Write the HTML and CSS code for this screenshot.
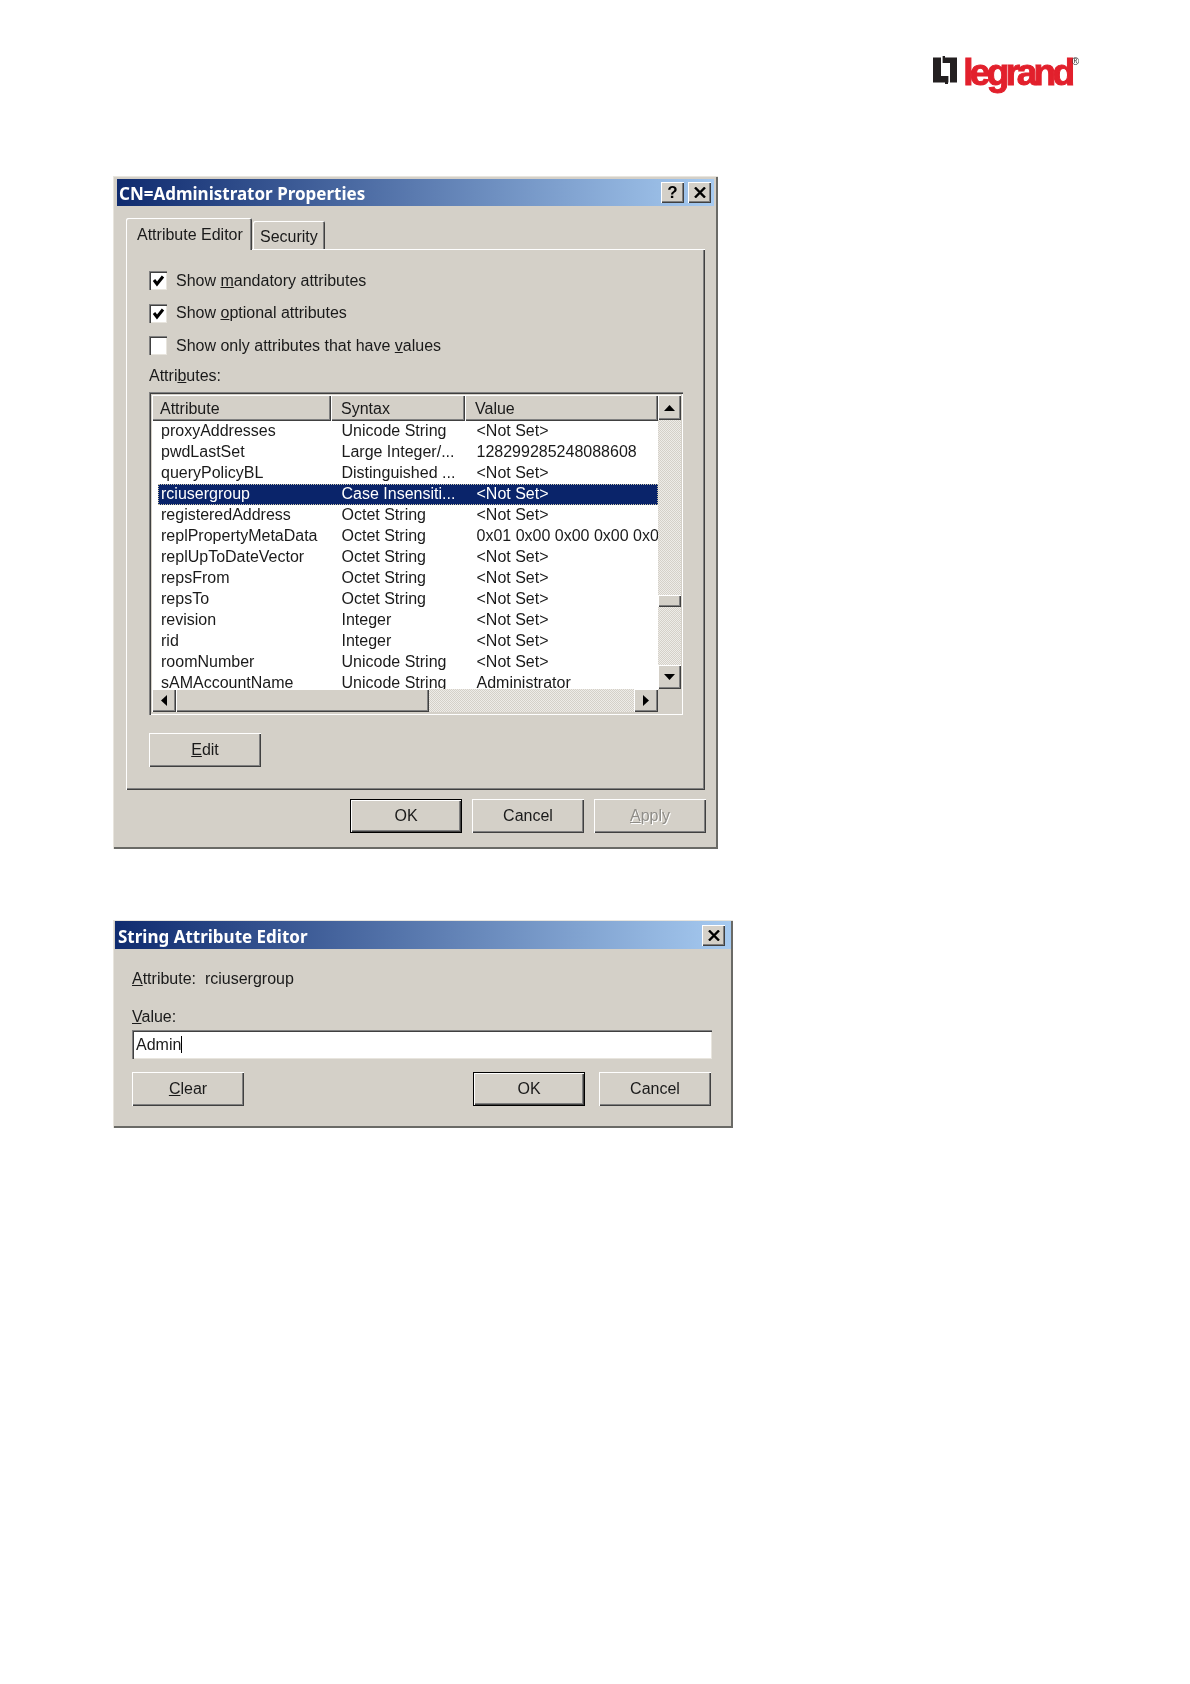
FILE: index.html
```html
<!DOCTYPE html>
<html lang="en">
<head>
<meta charset="utf-8">
<title>Attribute Editor</title>
<link rel="stylesheet" href="styles.css">
</head>
<body>
<header class="page-head">
  <div class="logo">
    <svg class="logo-mark" viewBox="0 0 24 28" width="24" height="28" aria-hidden="true">
      <rect x="0" y="1.5" width="24" height="25" fill="#231f20"/>
      <rect x="9" y="0" width="3" height="2" fill="#231f20"/>
      <rect x="12" y="26" width="3" height="2" fill="#231f20"/>
      <rect x="8" y="0" width="1.6" height="8" fill="#fff"/>
      <rect x="8" y="7" width="9" height="13" fill="#fff"/>
      <rect x="15.4" y="19" width="1.6" height="9" fill="#fff"/>
    </svg>
    <span class="logo-word">legrand</span><span class="logo-reg">®</span>
  </div>
</header>

<main class="page">
  <section class="dialog props">
    <div class="titlebar">
      <span class="title-text">CN=Administrator Properties</span>
      <div class="title-btns">
        <span class="cap-btn">?</span>
        <span class="cap-btn">
          <svg viewBox="0 0 12 11" width="12" height="11"><path d="M1 0.5 L11 10.5 M11 0.5 L1 10.5" stroke="#000" stroke-width="2.4" fill="none"/></svg>
        </span>
      </div>
    </div>

    <div class="tabs">
      <div class="tab tab-on">Attribute Editor</div>
      <div class="tab">Security</div>
    </div>

    <div class="panel">
      <div class="checks">
        <label class="check"><span class="box"><svg viewBox="0 0 13 13" width="13" height="13"><path d="M2 6 L5 10 L11 2.5" stroke="#000" stroke-width="3" fill="none"/></svg></span>Show <u>m</u>andatory attributes</label>
        <label class="check"><span class="box"><svg viewBox="0 0 13 13" width="13" height="13"><path d="M2 6 L5 10 L11 2.5" stroke="#000" stroke-width="3" fill="none"/></svg></span>Show <u>o</u>ptional attributes</label>
        <label class="check"><span class="box"></span>Show only attributes that have <u>v</u>alues</label>
      </div>
      <div class="list-label">Attri<u>b</u>utes:</div>

      <div class="list">
        <div class="list-main">
          <div class="list-head">
            <span class="col-head">Attribute</span>
            <span class="col-head">Syntax</span>
            <span class="col-head">Value</span>
          </div>
          <div class="row"><span>proxyAddresses</span><span>Unicode String</span><span>&lt;Not Set&gt;</span></div>
          <div class="row"><span>pwdLastSet</span><span>Large Integer/...</span><span>128299285248088608</span></div>
          <div class="row"><span>queryPolicyBL</span><span>Distinguished ...</span><span>&lt;Not Set&gt;</span></div>
          <div class="row row-on"><span>rciusergroup</span><span>Case Insensiti...</span><span>&lt;Not Set&gt;</span></div>
          <div class="row"><span>registeredAddress</span><span>Octet String</span><span>&lt;Not Set&gt;</span></div>
          <div class="row"><span>replPropertyMetaData</span><span>Octet String</span><span>0x01 0x00 0x00 0x00 0x00</span></div>
          <div class="row"><span>replUpToDateVector</span><span>Octet String</span><span>&lt;Not Set&gt;</span></div>
          <div class="row"><span>repsFrom</span><span>Octet String</span><span>&lt;Not Set&gt;</span></div>
          <div class="row"><span>repsTo</span><span>Octet String</span><span>&lt;Not Set&gt;</span></div>
          <div class="row"><span>revision</span><span>Integer</span><span>&lt;Not Set&gt;</span></div>
          <div class="row"><span>rid</span><span>Integer</span><span>&lt;Not Set&gt;</span></div>
          <div class="row"><span>roomNumber</span><span>Unicode String</span><span>&lt;Not Set&gt;</span></div>
          <div class="row"><span>sAMAccountName</span><span>Unicode String</span><span>Administrator</span></div>
        </div>
        <div class="vbar">
          <span class="sb-btn sb-up"><svg viewBox="0 0 11 6" width="11" height="6"><path d="M5.5 0 L11 6 L0 6 Z"/></svg></span>
          <span class="track vtrack-a"></span>
          <span class="vthumb"></span>
          <span class="track vtrack-b"></span>
          <span class="sb-btn sb-tall"><svg viewBox="0 0 11 6" width="11" height="6"><path d="M0 0 L11 0 L5.5 6 Z"/></svg></span>
        </div>
        <div class="hbar">
          <span class="sb-btn sb-wide"><svg viewBox="0 0 6 11" width="6" height="11"><path d="M6 0 L6 11 L0 5.5 Z"/></svg></span>
          <span class="hthumb"></span>
          <span class="track htrack"></span>
          <span class="sb-btn sb-wide"><svg viewBox="0 0 6 11" width="6" height="11"><path d="M0 0 L6 5.5 L0 11 Z"/></svg></span>
        </div>
        <div class="corner"></div>
      </div>

      <button class="btn btn-edit" type="button"><u>E</u>dit</button>
    </div>

    <div class="actions">
      <button class="btn btn-default" type="button">OK</button>
      <button class="btn" type="button">Cancel</button>
      <button class="btn btn-off" type="button"><u>A</u>pply</button>
    </div>
  </section>

  <section class="dialog editor">
    <div class="titlebar">
      <span class="title-text">String Attribute Editor</span>
      <div class="title-btns">
        <span class="cap-btn">
          <svg viewBox="0 0 12 11" width="12" height="11"><path d="M1 0.5 L11 10.5 M11 0.5 L1 10.5" stroke="#000" stroke-width="2.4" fill="none"/></svg>
        </span>
      </div>
    </div>
    <div class="editor-body">
      <div class="field-line"><u>A</u>ttribute:&nbsp; rciusergroup</div>
      <div class="field-line value-label"><u>V</u>alue:</div>
      <div class="input">Admin<span class="caret"></span></div>
      <div class="editor-actions">
        <button class="btn" type="button"><u>C</u>lear</button>
        <span class="spacer"></span>
        <button class="btn btn-default" type="button">OK</button>
        <button class="btn" type="button">Cancel</button>
      </div>
    </div>
  </section>
</main>
</body>
</html>
```

FILE: styles.css
```css
* { box-sizing: border-box; }

html, body { margin: 0; background: #fff; }

body {
  width: 1190px;
  height: 1684px;
  overflow: hidden;
  font-family: "Liberation Sans", Arial, sans-serif;
  font-size: 16px;
  color: #1a1a1a;
}

.page-head {
  height: 176px;
  display: flex;
  justify-content: flex-end;
  align-items: flex-start;
  padding: 56px 111px 0 0;
}

.logo { display: flex; align-items: flex-start; height: 40px; filter: blur(0.4px); }
.logo-mark { display: block; margin-right: 6px; }
.logo-word {
  font-family: "Liberation Sans", Arial, sans-serif;
  font-weight: 700;
  font-size: 37px;
  line-height: 34px;
  letter-spacing: -3.6px;
  color: #e2202c;
  -webkit-text-stroke: 1px #e2202c;
}
.logo-reg { font-size: 10px; line-height: 10px; color: #333; margin: 1px 0 0 0; }

.page { padding-left: 113px; }

.dialog {
  background: #d4d0c8;
  box-shadow: inset 1px 1px 0 #e8e5de, inset -2px -2px 0 #6a6a66;
  filter: blur(0.35px);
}

.props { width: 605px; height: 673px; padding: 3px 4px 0; }
.editor { width: 620px; height: 208px; margin-top: 71px; padding: 1px 2px 0; }

.titlebar {
  height: 27px;
  display: flex;
  align-items: center;
  justify-content: space-between;
  padding: 0 3px 0 2px;
  background: linear-gradient(90deg, #0f2b6f 0%, #a6caf0 100%);
}

.editor .titlebar { height: 28px; padding: 0 6px 0 3px; }

.title-text {
  font-family: "Noto Sans", sans-serif;
  font-weight: 700;
  font-size: 17px;
  padding-top: 2px;
  color: #fff;
}

.title-btns { display: flex; gap: 4px; }

.cap-btn {
  width: 23px;
  height: 21px;
  display: flex;
  align-items: center;
  justify-content: center;
  background: #d4d0c8;
  font-weight: 700;
  font-size: 17px;
  color: #000;
  box-shadow: inset 1px 1px 0 #fff, inset -1px -1px 0 #404040, inset -2px -2px 0 #808080;
}

.tabs {
  display: flex;
  align-items: flex-end;
  height: 43px;
  padding: 13px 0 0 9px;
}

.tab {
  height: 28px;
  padding: 4px 7px 0;
  display: flex;
  align-items: center;
  background: #d4d0c8;
  border-radius: 2px 2px 0 0;
  margin-left: 1px;
  box-shadow: inset 1px 1px 0 #fff, inset -1px 0 0 #404040, inset -2px 0 0 #808080;
}

.tab-on {
  position: relative;
  z-index: 1;
  height: 32px;
  margin: 0 0 -1px;
  width: 126px;
  padding: 1px 0 0 11px;
}

.panel {
  margin-left: 9px;
  width: 579px;
  height: 541px;
  padding: 22px 23px 0;
  box-shadow: inset 1px 1px 0 #fff, inset -1px -1px 0 #404040, inset -2px -2px 0 #808080;
}

.checks { display: flex; flex-direction: column; gap: 13.5px; }

.check { display: flex; align-items: center; height: 19px; white-space: pre; }

.box {
  width: 18px;
  height: 19px;
  margin-right: 9px;
  display: flex;
  align-items: center;
  justify-content: center;
  background: #fff;
  box-shadow: inset 1px 1px 0 #808080, inset 2px 2px 0 #404040, inset -1px -1px 0 #e8e5de;
}

.list-label { height: 20px; line-height: 20px; margin-top: 11px; }

.list {
  width: 534px;
  height: 323px;
  margin-top: 6px;
  padding: 3px 2px 3px 3px;
  display: grid;
  grid-template-columns: 506px 23px;
  grid-template-rows: 294px 23px;
  box-shadow: inset 1px 1px 0 #808080, inset 2px 2px 0 #404040, inset -1px -1px 0 #fff;
}

.list-main { background: #fff; overflow: hidden; }

.list-head {
  display: grid;
  grid-template-columns: 179px 134px 193px;
  height: 26px;
}

.col-head {
  display: flex;
  align-items: center;
  padding: 1px 0 0 8px;
  background: #d4d0c8;
  box-shadow: inset 1px 1px 0 #fff, inset -1px -1px 0 #404040, inset -2px -2px 0 #808080;
}

.col-head + .col-head { padding-left: 10px; }

.row {
  display: grid;
  grid-template-columns: 172px 135px 1fr;
  height: 21px;
  line-height: 20px;
  margin-left: 6px;
  padding-left: 3px;
  white-space: nowrap;
}

.row span { overflow: hidden; }
.row span + span { padding-left: 8.5px; }

.row-on {
  background: #0a246a;
  color: #fff;
  outline: 1px dotted #c9c4a8;
  outline-offset: -1px;
}

.vbar { display: flex; flex-direction: column; }
.hbar { display: flex; }
.corner { background: #d4d0c8; }

.track {
  background: repeating-conic-gradient(#eeece8 0 25%, #d4d0c8 0 50%) 0 0 / 2px 2px;
}

.vtrack-a { height: 175px; }
.vtrack-b { height: 58px; }
.htrack { flex: 1; }

.sb-btn {
  display: flex;
  align-items: center;
  justify-content: center;
  flex: none;
  background: #d4d0c8;
  box-shadow: inset 1px 1px 0 #fff, inset -1px -1px 0 #404040, inset -2px -2px 0 #808080;
}

.sb-up { width: 23px; height: 25px; }
.sb-tall { width: 23px; height: 24px; }
.sb-wide { width: 24px; height: 23px; }

.vthumb, .hthumb {
  flex: none;
  background: #d4d0c8;
  box-shadow: inset 1px 1px 0 #fff, inset -1px -1px 0 #404040, inset -2px -2px 0 #808080;
}

.vthumb { height: 12px; }
.hthumb { width: 253px; }

.btn {
  width: 112px;
  height: 34px;
  padding: 0;
  border: 0;
  border-radius: 0;
  font: inherit;
  color: inherit;
  background: #d4d0c8;
  box-shadow: inset 1px 1px 0 #fff, inset -1px -1px 0 #404040, inset -2px -2px 0 #808080;
}

.btn-edit { display: block; margin-top: 18px; }

.btn-default {
  box-shadow: inset 0 0 0 1px #000, inset 2px 2px 0 #fff, inset -2px -2px 0 #404040, inset -3px -3px 0 #808080;
}

.btn-off { color: #8f8d88; text-shadow: 1px 1px 0 #fff; }

.actions {
  display: flex;
  justify-content: flex-end;
  gap: 10px;
  margin-top: 9px;
  padding-right: 8px;
}

.editor-body { padding: 0 19px 0 17px; }

.field-line { height: 20px; line-height: 20px; }
.editor-body .field-line:first-child { margin-top: 20px; }
.value-label { margin-top: 18px; }

.input {
  height: 29px;
  margin-top: 3px;
  padding-left: 4px;
  display: flex;
  align-items: center;
  background: #fff;
  box-shadow: inset 1px 1px 0 #808080, inset 2px 2px 0 #404040, inset -1px -1px 0 #e8e5de;
}

.caret { width: 1px; height: 17px; background: #000; }

.editor-actions {
  display: flex;
  gap: 14px;
  margin-top: 13px;
  padding-right: 1px;
}

.spacer { flex: 1; }
```
